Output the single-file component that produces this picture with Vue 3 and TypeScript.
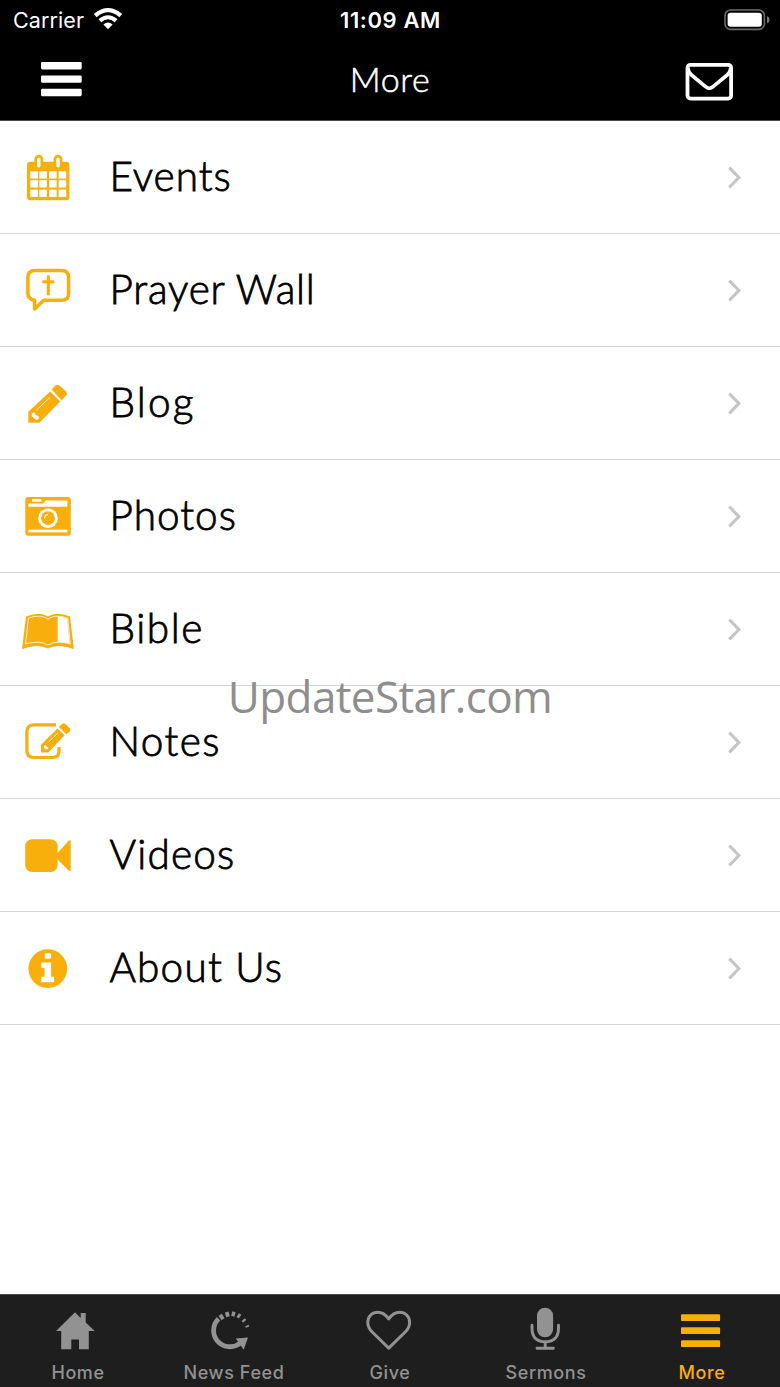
<script setup lang="ts">
type IconName = 'events' | 'prayer' | 'blog' | 'photos' | 'bible' | 'notes' | 'videos' | 'about'
interface MenuRow { label: string; icon: IconName; tracking: number }
interface Tab { label: string; icon: string; active?: boolean }

const rows: MenuRow[] = [
  { label: 'Events', icon: 'events', tracking: 1 },
  { label: 'Prayer Wall', icon: 'prayer', tracking: 0.8 },
  { label: 'Blog', icon: 'blog', tracking: 2.2 },
  { label: 'Photos', icon: 'photos', tracking: 1 },
  { label: 'Bible', icon: 'bible', tracking: 1.6 },
  { label: 'Notes', icon: 'notes', tracking: 1.4 },
  { label: 'Videos', icon: 'videos', tracking: 1.2 },
  { label: 'About Us', icon: 'about', tracking: 1.2 },
]

const tabs: Tab[] = [
  { label: 'Home', icon: 'home' },
  { label: 'News Feed', icon: 'news' },
  { label: 'Give', icon: 'give' },
  { label: 'Sermons', icon: 'sermons' },
  { label: 'More', icon: 'more', active: true },
]

const cellX = [10.3, 19.3, 29.1, 38.6]
const cellY = [22.3, 31.2, 40.6]
</script>

<template>
  <div class="screen">
    <header class="top">
      <div class="status">
        <div class="carrier">
          <span>Carrier</span>
          <svg class="wifi" width="30" height="22" viewBox="0 0 30 22">
            <path d="M15 21.2 L10.4 16.4 Q15 12.6 19.6 16.4 Z" fill="#fff" />
            <path d="M6.9 12.6 Q15 5.8 23.1 12.6" fill="none" stroke="#fff" stroke-width="4" />
            <path d="M2.2 7.7 Q15 -3.4 27.8 7.7" fill="none" stroke="#fff" stroke-width="4.2" />
          </svg>
        </div>
        <span class="time">11:09 AM</span>
        <svg class="battery" width="47" height="22" viewBox="0 0 47 22">
          <rect x="1" y="1" width="39.4" height="19.4" rx="5.5" fill="none" stroke="#6b6b6b" stroke-width="1.6" />
          <rect x="3.6" y="3.7" width="34.2" height="14" rx="3" fill="#fff" />
          <path d="M43 7 Q45.6 8.2 45.6 10.7 Q45.6 13.2 43 14.4 Z" fill="#777" />
        </svg>
      </div>
      <nav class="bar">
        <svg class="burger" width="42" height="36" viewBox="0 0 42 36" fill="#fff">
          <rect x="1" y="1" width="40.7" height="7.4" rx="1.4" />
          <rect x="1" y="14.4" width="40.7" height="7.4" rx="1.4" />
          <rect x="1" y="27.8" width="40.7" height="7.4" rx="1.4" />
        </svg>
        <h1>More</h1>
        <svg class="mail" width="49" height="40" viewBox="0 0 49 40" fill="none" stroke="#fff">
          <rect x="2.5" y="2.8" width="43.6" height="33.8" rx="3" stroke-width="3.8" />
          <path d="M2.8 6 Q3.3 10.4 6.5 13 L20.2 24.4 Q24.3 28.2 28.4 24.4 L42.2 13 Q45.3 10.4 45.8 6" stroke-width="3.6" />
        </svg>
      </nav>
    </header>

    <main class="list">
      <div v-for="row in rows" :key="row.label" class="row">
        <svg class="icon" width="56" height="56" viewBox="0 0 56 56">
          <g v-if="row.icon === 'events'" fill="#f8ae0b">
            <rect x="7" y="12.8" width="42.4" height="38.4" rx="3" />
            <rect x="14.4" y="5.8" width="8.8" height="14" rx="4.4" />
            <rect x="33.6" y="5.8" width="8.8" height="14" rx="4.4" />
            <g fill="#fff">
              <rect x="17.1" y="8.4" width="3.4" height="10" rx="1.7" />
              <rect x="36.3" y="8.4" width="3.4" height="10" rx="1.7" />
              <template v-for="y in cellY" :key="y">
                <rect v-for="x in cellX" :key="x" :x="x" :y="y" width="7.6" height="7.3" />
              </template>
            </g>
          </g>
          <g v-else-if="row.icon === 'prayer'" fill="none" stroke="#f8ae0b" stroke-width="3.5" stroke-linejoin="round">
            <path d="M14.6 38.3 V47 L23.8 38.3 H41.5 Q48.6 38.3 48.6 31.5 V15.6 Q48.6 8.6 41.5 8.6 H15 Q7.9 8.6 7.9 15.6 V31.5 Q7.9 37 14.6 38.3 Z" />
            <path d="M28.3 14.6 V32 M23.4 19.7 H33.2" stroke-width="3" stroke-linecap="round" />
          </g>
          <g v-else-if="row.icon === 'blog'" fill="#f8ae0b">
            <path d="M8.3 36.8 L30.2 16.4 L40.2 26.6 L19.4 47.7 H8.3 Z" />
            <path d="M31.6 14.2 L35.6 10.6 Q37.6 8.9 39.8 10.8 L46 16.6 Q47.8 18.6 46 20.6 L41.6 25.2 Z" />
            <path d="M12 37.8 L14.6 37.4 L15.8 40 L18.4 41 L19.2 43.6 L16.6 45 L11.6 41.2 Z" fill="#fff" />
            <path d="M16.4 35.2 L30 22.4" stroke="#fff" stroke-width="0.8" />
          </g>
          <g v-else-if="row.icon === 'photos'" fill="#f8ae0b">
            <rect x="5.3" y="9" width="45.5" height="38.7" rx="3" />
            <g fill="#fff">
              <rect x="12" y="11" width="9.4" height="2.7" />
              <path d="M8.3 15.6 H23.2 L25.6 12.4 H47.4 V18.7 H8.3 Z" />
              <rect x="8.3" y="41.6" width="39.1" height="2.8" />
              <circle cx="28" cy="30.2" r="9.8" />
            </g>
            <circle cx="28" cy="30.2" r="6.9" />
            <path d="M24.6 30.2 Q24.7 26.9 28 26.7" fill="none" stroke="#fff" stroke-width="1.2" />
          </g>
          <g v-else-if="row.icon === 'bible'">
            <path d="M6 15.6 Q20 9.8 28 15.6 Q36 9.8 50.1 15.6 L53.8 48.2 Q37 42 28 47.5 Q19 42 2 48.2 Z" fill="#f8ae0b" />
            <path d="M8.4 17.2 Q20 12.6 28 18 Q36 12.6 47.7 17.2 L50.3 43 Q36.5 38.8 28 44 Q19.5 38.8 5.6 43 Z" fill="none" stroke="#fff" stroke-width="0.8" />
            <path d="M37.7 15.8 Q43 15.5 47.3 17.4 L49.6 42.4 Q44 41 37.7 41.3 Z" fill="#fff" />
          </g>
          <g v-else-if="row.icon === 'notes'" fill="#f8ae0b">
            <path d="M36 10.9 H13.8 Q6.9 10.9 6.9 17.8 V36.8 Q6.9 43.5 13.8 43.5 H32.6 Q39 43.5 39 37 V33" fill="none" stroke="#f8ae0b" stroke-width="3.2" />
            <path d="M21 30.8 L37.4 14.4 L44.6 21.2 L28.2 38.4 H21 Z" />
            <path d="M38.9 13 L42 10 Q43.6 8.6 45.4 10 L49.8 14.2 Q51.2 15.6 49.9 17.2 L46.2 20.2 Z" />
            <path d="M24 31.4 L26 31.6 L27 33 L28.8 33.8 L27.3 35.6 L23.8 34 Z" fill="#fff" />
            <path d="M28.4 28.2 L38 18.8" stroke="#fff" stroke-width="0.9" />
          </g>
          <g v-else-if="row.icon === 'videos'" fill="#f8ae0b">
            <rect x="5.2" y="12.3" width="32.4" height="32.8" rx="7" />
            <path d="M36.5 27.3 L48.6 13.8 Q50.7 12.2 50.7 14.6 V42.6 Q50.7 45 48.6 43.4 L36.5 31.3 Z" />
          </g>
          <g v-else>
            <circle cx="27.8" cy="28.6" r="19.4" fill="#f8ae0b" />
            <path d="M26 13.2 H29.8 Q31.2 13.2 31.2 14.6 V17.4 Q31.2 18.8 29.8 18.8 H26 Q24.6 18.8 24.6 17.4 V14.6 Q24.6 13.2 26 13.2 Z M21.3 22.5 H31.1 V36.7 H34.1 V42.2 H21.3 V36.7 H24.5 V27.9 H21.3 Z" fill="#fff" />
          </g>
        </svg>
        <span class="label" :style="{ letterSpacing: row.tracking + 'px' }">{{ row.label }}</span>
        <svg class="chevron" width="16" height="26" viewBox="0 0 16 26">
          <path d="M3.3 3.7 L12.9 13.5 L3.3 23.3" fill="none" stroke="#c5c5c7" stroke-width="3.1" />
        </svg>
      </div>
    </main>

    <footer class="tabs">
      <div v-for="tab in tabs" :key="tab.label" class="tab" :class="{ active: tab.active }">
        <svg width="60" height="56" viewBox="0 0 60 56" fill="currentColor">
          <path v-if="tab.icon === 'home'" d="M27 12.2 L32.7 18 V13 H37.7 V22.6 L46.7 31 H40.8 V49.2 H31 V39.6 H23.3 V49.2 H13.2 V31 H8 Z" />
          <g v-else-if="tab.icon === 'news'" fill="none" stroke="currentColor">
            <path d="M14.6 18.7 A16.3 16.3 0 0 0 36.3 43" stroke-width="4.8" />
            <path d="M44 37.6 L31.8 38.4 L39.7 49.8 Z" fill="currentColor" stroke="none" />
            <path d="M16.2 14.8 L19 19.2" stroke-width="3.8" />
            <path d="M22.8 12 L24 16.8" stroke-width="3.8" />
            <path d="M30 11.8 L28.8 16.2" stroke-width="3.4" />
            <path d="M36.2 14 L33.6 17.8" stroke-width="2.8" />
            <path d="M41.5 19 L38.4 21.8" stroke-width="2.3" />
            <path d="M45 25.6 L41.4 27" stroke-width="1.8" />
          </g>
          <path v-else-if="tab.icon === 'give'" d="M28.7 48.1 L12.2 32 C7.8 27.6 7.8 24.6 7.8 22.4 C7.8 16.4 12.3 12.2 17.8 12.2 C23.4 12.2 26.4 15.6 28.7 18.9 C31 15.6 34 12.2 39.6 12.2 C45.1 12.2 49.6 16.4 49.6 22.4 C49.6 24.6 49.6 27.6 45.2 32 Z" fill="none" stroke="currentColor" stroke-width="3" stroke-linejoin="round" />
          <g v-else-if="tab.icon === 'sermons'">
            <rect x="21" y="7.7" width="16.1" height="29.6" rx="8" />
            <path d="M16 25.2 V28 Q16 41.8 29.2 41.8 Q42.5 41.8 42.5 28 V25.2 M29.2 42 V48.2 M21 48.2 H37.4" fill="none" stroke="currentColor" stroke-width="2.9" stroke-linecap="round" />
          </g>
          <g v-else>
            <rect x="9" y="14.2" width="39.1" height="6.9" rx="1.2" />
            <rect x="9" y="27.2" width="39.1" height="6.9" rx="1.2" />
            <rect x="9" y="40.2" width="39.1" height="6.9" rx="1.2" />
          </g>
        </svg>
        <span>{{ tab.label }}</span>
      </div>
    </footer>

    <div class="watermark">UpdateStar.com</div>
  </div>
</template>

<style>
body { margin: 0; }
</style>

<style scoped>
.screen {
  position: relative;
  display: flex;
  flex-direction: column;
  width: 780px;
  height: 1387px;
  overflow: hidden;
  background: #fff;
  color: #000;
}
.screen svg { display: block; flex: none; }
.top {
  box-sizing: border-box;
  height: 121px;
  background: #000;
  color: #fff;
  border-bottom: 1px solid #4a4a4a;
}
.status {
  display: grid;
  grid-template-columns: 1fr auto 1fr;
  height: 40px;
  align-items: center;
  padding: 0 9px 0 13px;
  font: 400 21.5px/40px Inter, "Liberation Sans", sans-serif;
}
.carrier { display: flex; align-items: center; gap: 9px; letter-spacing: 0.1px; }
.wifi { margin-top: -3px; }
.time { margin-right: 3px; font-size: 22px; font-weight: 600; letter-spacing: 0.6px; }
.battery { justify-self: end; margin-top: -1px; }
.bar {
  display: grid;
  grid-template-columns: 1fr auto 1fr;
  height: 80px;
  align-items: center;
  padding: 0 46px 0 40px;
}
.burger { margin-top: -2px; }
.bar h1 {
  margin: -3px -6px 0 0;
  font: 300 34px/60px Lato, "Open Sans", sans-serif;
  letter-spacing: 0.6px;
  -webkit-text-stroke: 0.5px currentColor;
}
.mail { justify-self: end; margin-top: 4px; }
.list { flex: 1; }
.row {
  box-sizing: border-box;
  display: flex;
  align-items: center;
  height: 113px;
  padding: 0 38px 0 20px;
  border-bottom: 1px solid #d3d3d5;
}
.label {
  flex: 1;
  margin-top: -2px;
  padding-left: 33.5px;
  font: 300 40.5px/56px Lato, "Open Sans", sans-serif;
  -webkit-text-stroke: 0.8px currentColor;
}
.tabs {
  box-sizing: border-box;
  display: grid;
  grid-template-columns: repeat(5, 156px);
  height: 93px;
  padding-top: 5px;
  border-top: 1px solid #4c4c4c;
  background: #1e1e1e;
}
.tab {
  display: flex;
  flex-direction: column;
  align-items: center;
  color: #929292;
  font: 500 18px/33px Inter, "Liberation Sans", sans-serif;
  letter-spacing: 0.6px;
}
.tab.active { color: #f8ae0b; }
.watermark {
  position: absolute;
  top: 666px;
  left: 0;
  width: 780px;
  text-align: center;
  font: 400 44px/60px "Open Sans", "Noto Sans", sans-serif;
  letter-spacing: -0.6px;
  color: #8e8e8e;
}
</style>
